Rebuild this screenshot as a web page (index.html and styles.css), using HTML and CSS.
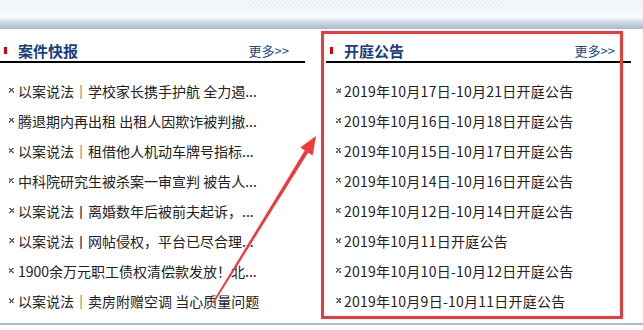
FILE: index.html
```html
<!DOCTYPE html>
<html lang="zh-CN">
<head>
<meta charset="utf-8">
<title>案件快报 / 开庭公告</title>
<link rel="stylesheet" href="styles.css">
</head>
<body>
<div class="topbar"></div>
<div class="main">
  <section class="panel panel-left">
    <div class="panel-head">
      <span class="mark"></span>
      <h2 class="title">案件快报</h2>
      <a class="more" href="#">更多&gt;&gt;</a>
    </div>
    <ul class="list">
      <li>以案说法｜学校家长携手护航 全力遏...</li>
      <li>腾退期内再出租 出租人因欺诈被判撤...</li>
      <li>以案说法｜租借他人机动车牌号指标...</li>
      <li>中科院研究生被杀案一审宣判 被告人...</li>
      <li>以案说法丨离婚数年后被前夫起诉，...</li>
      <li>以案说法丨网帖侵权，平台已尽合理...</li>
      <li>1900余万元职工债权清偿款发放！北...</li>
      <li>以案说法｜卖房附赠空调 当心质量问题</li>
    </ul>
  </section>
  <section class="panel panel-right">
    <div class="panel-head">
      <span class="mark"></span>
      <h2 class="title">开庭公告</h2>
      <a class="more" href="#">更多&gt;&gt;</a>
    </div>
    <ul class="list">
      <li>2019年10月17日-10月21日开庭公告</li>
      <li>2019年10月16日-10月18日开庭公告</li>
      <li>2019年10月15日-10月17日开庭公告</li>
      <li>2019年10月14日-10月16日开庭公告</li>
      <li>2019年10月12日-10月14日开庭公告</li>
      <li>2019年10月11日开庭公告</li>
      <li>2019年10月10日-10月12日开庭公告</li>
      <li>2019年10月9日-10月11日开庭公告</li>
    </ul>
  </section>
</div>
<div class="footer-line"></div>
<div class="highlight-box"></div>
<svg class="annot-arrow" width="643" height="330" viewBox="0 0 643 330" aria-hidden="true">
  <polygon points="213.7,303.4 212.3,302.6 304.9,150.3 308.3,152.3" fill="#ef3a3a"/>
  <polygon points="316,136 312.6,155.5 300.3,147.6" fill="#ef3a3a"/>
</svg>
</body>
</html>
```
FILE: styles.css
```css
html, body {
  margin: 0;
  padding: 0;
}
body {
  width: 643px;
  height: 330px;
  overflow: hidden;
  position: relative;
  background: #ffffff;
  font-family: "Noto Sans CJK SC", "Noto Sans", sans-serif;
}
.topbar {
  height: 29px;
  background:
    linear-gradient(to bottom,
      rgba(255,255,255,0) 0,
      rgba(255,255,255,0.3) 14px,
      #fbfcfd 16px,
      #f6f8fb 18px,
      #dfe6ef 20px,
      #c4d1e0 24px,
      #a8bad0 29px),
    repeating-conic-gradient(#ebf0f7 0 25%, #f5f7fb 0 50%) 0 0 / 4px 4px;
}
.main {
  display: flex;
  gap: 21px;
}
.panel {
  width: 305px;
}
.panel-head {
  height: 17px;
  border-bottom: 2px solid #000;
  display: flex;
  align-items: center;
  padding: 13px 16px 2px 4px;
}
.mark {
  width: 3px;
  height: 7px;
  background: #d40000;
  margin-right: 11px;
}
.title {
  margin: 0;
  font-size: 15px;
  font-weight: bold;
  color: #1a3f80;
  line-height: 17px;
  flex: 1;
}
.more {
  font-size: 13px;
  color: #1b4a8c;
  text-decoration: none;
  line-height: 17px;
}
.list {
  list-style: none;
  margin: 0;
  padding: 13px 0 7px 0;
}
.list li {
  height: 30px;
  line-height: 30px;
  font-size: 14px;
  color: #222;
  padding-left: 18px;
  position: relative;
  white-space: nowrap;
}
.panel-right .list li {
  letter-spacing: 0.25px;
}
.list li::before {
  content: "";
  position: absolute;
  left: 9px;
  top: 12px;
  width: 5px;
  height: 5px;
  background:
    linear-gradient(45deg, transparent 40%, #666 40%, #666 60%, transparent 60%),
    linear-gradient(-45deg, transparent 40%, #666 40%, #666 60%, transparent 60%);
}
.panel-right .list li::before {
  left: 10px;
}
.footer-line {
  height: 2px;
  background: #a9c0dc;
}
.highlight-box {
  position: absolute;
  left: 321px;
  top: 31px;
  width: 302px;
  height: 288px;
  border: 3px solid #ef3a3a;
  box-sizing: border-box;
}
.annot-arrow {
  position: absolute;
  left: 0;
  top: 0;
  pointer-events: none;
}
```
